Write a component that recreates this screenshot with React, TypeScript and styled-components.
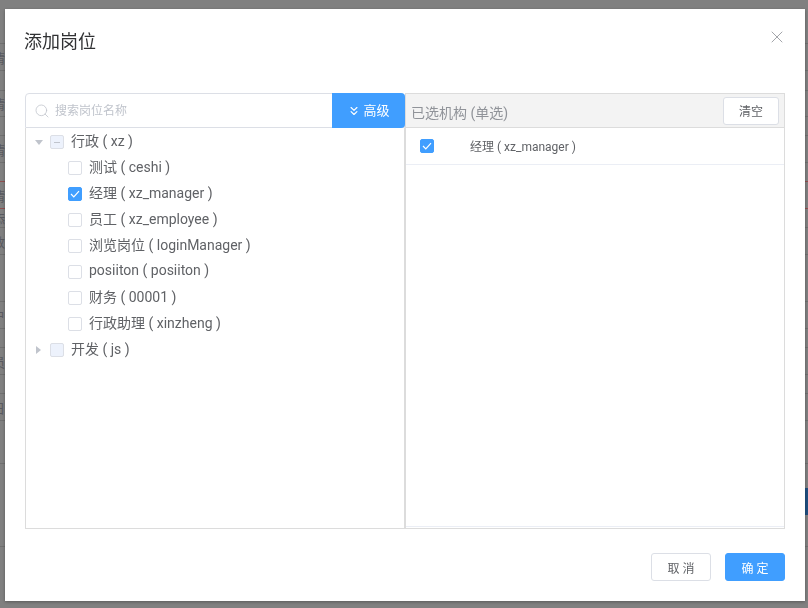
import styled, { createGlobalStyle } from 'styled-components';
import { ChevronsDown, Search, X } from 'lucide-react';

const GlobalStyle = createGlobalStyle`
  html, body {
    margin: 0;
    padding: 0;
    width: 808px;
    height: 608px;
    overflow: hidden;
    background: #808080;
    font-family: Roboto, "Noto Sans CJK SC", sans-serif;
  }
  * { box-sizing: border-box; }
`;

type Post = { name: string; code: string; checked?: boolean };

const posts: Post[] = [
  { name: '测试', code: 'ceshi' },
  { name: '经理', code: 'xz_manager', checked: true },
  { name: '员工', code: 'xz_employee' },
  { name: '浏览岗位', code: 'loginManager' },
  { name: 'posiiton', code: 'posiiton' },
  { name: '财务', code: '00001' },
  { name: '行政助理', code: 'xinzheng' },
];

// table behind the mask, only its edges show on both sides of the dialog
const backdropRows: { height: number; text?: string; red?: boolean }[] = [
  { height: 44 },
  { height: 27, text: '情' },
  { height: 20 },
  { height: 26, text: '情' },
  { height: 19 },
  { height: 27, text: '情' },
  { height: 19, red: true },
  { height: 27, text: '情', red: true },
  { height: 19, text: '添' },
  { height: 27, text: '数' },
  { height: 47 },
  { height: 27, text: '户' },
  { height: 19 },
  { height: 27, text: '员' },
  { height: 19 },
  { height: 27, text: '日' },
  { height: 43 },
  { height: 83 },
];

function CheckMark() {
  return (
    <svg width="10" height="8" viewBox="0 0 10 8" fill="none">
      <path d="M1 4l2.8 2.8L9 1.2" stroke="#fff" strokeWidth="1.2" />
    </svg>
  );
}

export default function App() {
  return (
    <>
      <GlobalStyle />
      <Backdrop>
        {backdropRows.map((row, i) => (
          <BackdropRow key={i} $height={row.height} $red={row.red}>
            {row.text}
          </BackdropRow>
        ))}
      </Backdrop>
      <SideMark />
      <Modal>
        <Header>
          <Title>添加岗位</Title>
          <CloseButton><X size={20} strokeWidth={1} color="#909399" /></CloseButton>
        </Header>
        <Body>
          <LeftPane>
            <SearchBar>
              <SearchField>
                <Search size={16} strokeWidth={1.2} color="#c0c4cc" />
                <SearchHint>搜索岗位名称</SearchHint>
              </SearchField>
              <AdvancedButton>
                <ChevronsDown size={14} strokeWidth={2} />
                <AdvancedText>高级</AdvancedText>
              </AdvancedButton>
            </SearchBar>
            <Tree>
              <TreeRow>
                <Caret $open />
                <Box $tone="group"><Dash /></Box>
                <TreeLabel>行政 ( xz )</TreeLabel>
              </TreeRow>
              {posts.map((p) => (
                <ChildRow key={p.code}>
                  <Box $tone={p.checked ? 'on' : 'off'}>{p.checked && <CheckMark />}</Box>
                  <TreeLabel>{p.name} ( {p.code} )</TreeLabel>
                </ChildRow>
              ))}
              <TreeRow>
                <Caret />
                <Box $tone="group" />
                <TreeLabel>开发 ( js )</TreeLabel>
              </TreeRow>
            </Tree>
          </LeftPane>
          <RightPane>
            <RightHead>
              <RightTitle>已选机构 (单选)</RightTitle>
              <ClearButton>清空</ClearButton>
            </RightHead>
            <SelectedRow>
              <Box $tone="on"><CheckMark /></Box>
              <SelectedLabel>经理 ( xz_manager )</SelectedLabel>
            </SelectedRow>
            <RightSpace />
          </RightPane>
        </Body>
        <Footer>
          <FooterButton>取 消</FooterButton>
          <FooterButton $primary>确 定</FooterButton>
        </Footer>
      </Modal>
    </>
  );
}

const Backdrop = styled.div`
  width: 808px;
`;

const BackdropRow = styled.div<{ $height: number; $red?: boolean }>`
  height: ${(p) => p.$height}px;
  border-bottom: 1px solid ${(p) => (p.$red ? '#8f4f4f' : '#707070')};
  display: flex;
  align-items: center;
  margin-left: -8px;
  font-size: 13px;
  color: #5a5a60;
`;

const SideMark = styled.div`
  position: fixed;
  right: 0;
  top: 488px;
  width: 3px;
  height: 27px;
  background: #1f4f80;
`;

const Modal = styled.div`
  position: fixed;
  left: 5px;
  top: 9px;
  width: 800px;
  height: 592px;
  background: #fff;
  box-shadow: 0 1px 3px rgba(0, 0, 0, 0.3);
  display: flex;
  flex-direction: column;
  padding: 0 20px;
`;

const Header = styled.div`
  height: 84px;
  display: flex;
  justify-content: space-between;
  align-items: flex-start;
`;

const Title = styled.div`
  font-size: 18px;
  line-height: 24px;
  margin-top: 21px;
  margin-left: -1px;
  color: #303133;
`;

const CloseButton = styled.div`
  display: flex;
  margin-top: 18px;
  margin-right: -2px;
`;

const Body = styled.div`
  height: 436px;
  display: flex;
`;

const LeftPane = styled.div`
  width: 380px;
  display: flex;
  flex-direction: column;
`;

const SearchBar = styled.div`
  height: 35px;
  display: flex;
  border: 1px solid #dcdfe6;
  border-radius: 4px 4px 0 0;
`;

const SearchField = styled.div`
  flex: 1;
  display: flex;
  align-items: center;
  gap: 5px;
  padding-left: 8px;
`;

const SearchHint = styled.span`
  font-size: 12px;
  color: #c0c4cc;
  padding-bottom: 2px;
`;

const AdvancedButton = styled.div`
  width: 73px;
  margin: -1px -1px -1px 0;
  background: #409eff;
  border-radius: 0 4px 4px 0;
  color: #fff;
  display: flex;
  align-items: center;
  justify-content: center;
  gap: 2px;
`;

const AdvancedText = styled.span`
  font-size: 13px;
  padding-bottom: 2px;
`;

const Tree = styled.div`
  flex: 1;
  border: 1px solid #dcdcdc;
  border-top: none;
  padding-top: 1px;
`;

const TreeRow = styled.div`
  height: 26px;
  display: flex;
  align-items: center;
  padding-left: 9px;
`;

const ChildRow = styled(TreeRow)`
  padding-left: 42px;
`;

const Caret = styled.span<{ $open?: boolean }>`
  width: 0;
  height: 0;
  ${(p) =>
    p.$open
      ? `margin-right: 7px; border-left: 4px solid transparent; border-right: 4px solid transparent; border-top: 5px solid #c0c4cc;`
      : `margin-left: 1px; margin-right: 9px; border-top: 4px solid transparent; border-bottom: 4px solid transparent; border-left: 5px solid #c0c4cc;`}
`;

const toneStyles = {
  off: 'background: #fff; border-color: #dcdfe6;',
  on: 'background: #409eff; border-color: #409eff;',
  group: 'background: #edf2fc; border-color: #dcdfe6;',
};

const Box = styled.span<{ $tone: keyof typeof toneStyles }>`
  width: 14px;
  height: 14px;
  flex: none;
  border: 1px solid;
  border-radius: 2px;
  display: flex;
  align-items: center;
  justify-content: center;
  ${(p) => toneStyles[p.$tone]}
`;

const Dash = styled.span`
  width: 6px;
  height: 1px;
  background: #c0c4cc;
`;

const TreeLabel = styled.span`
  margin-left: 7px;
  font-size: 14px;
  color: #606266;
  white-space: pre;
  padding-bottom: 4px;
`;

const RightPane = styled.div`
  width: 380px;
  display: flex;
  flex-direction: column;
  border: 1px solid #dcdcdc;
`;

const RightHead = styled.div`
  height: 34px;
  background: #f3f3f3;
  border-bottom: 1px solid #dcdcdc;
  display: flex;
  align-items: center;
  justify-content: space-between;
  padding: 0 5px;
`;

const RightTitle = styled.span`
  font-size: 14px;
  color: #909399;
  margin-top: 2px;
`;

const ClearButton = styled.div`
  width: 56px;
  height: 28px;
  background: #fff;
  border: 1px solid #dcdfe6;
  border-radius: 3px;
  font-size: 12px;
  color: #606266;
  display: flex;
  align-items: center;
  justify-content: center;
`;

const SelectedRow = styled.div`
  height: 37px;
  display: flex;
  align-items: center;
  padding-left: 14px;
  border-bottom: 1px solid #ebeef5;
`;

const SelectedLabel = styled.span`
  margin-left: 36px;
  font-size: 12px;
  color: #606266;
  padding-bottom: 2px;
`;

const RightSpace = styled.div`
  flex: 1;
  border-bottom: 1px solid #ebeef5;
  margin-bottom: 1px;
`;

const Footer = styled.div`
  flex: 1;
  display: flex;
  justify-content: flex-end;
  gap: 14px;
  padding-top: 24px;
`;

const FooterButton = styled.div<{ $primary?: boolean }>`
  width: 60px;
  height: 28px;
  border: 1px solid ${(p) => (p.$primary ? '#409eff' : '#dcdfe6')};
  background: ${(p) => (p.$primary ? '#409eff' : '#fff')};
  color: ${(p) => (p.$primary ? '#fff' : '#606266')};
  border-radius: 3px;
  font-size: 12px;
  display: flex;
  align-items: center;
  justify-content: center;
`;
